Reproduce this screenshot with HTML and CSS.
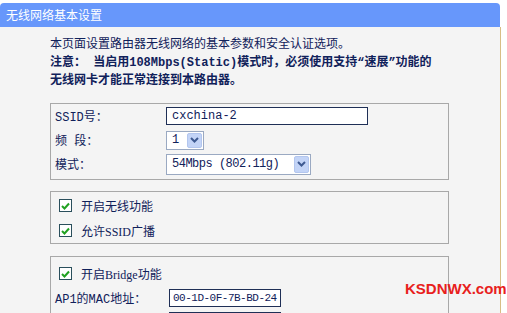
FILE: index.html
```html
<!DOCTYPE html>
<html lang="zh-CN">
<head>
    <meta charset="UTF-8">
    <title>无线网络基本设置</title>
    <link rel="stylesheet" href="styles.css">
</head>
<body>
    <div class="page">
        <div class="title_bar">无线网络基本设置</div>
        <div class="content">
            <div class="intro">
                <p>本页面设置路由器无线网络的基本参数和安全认证选项。</p>
                <p class="notice">注意： 当启用108Mbps(Static)模式时，必须使用支持“速展”功能的</p>
                <p class="notice">无线网卡才能正常连接到本路由器。</p>
            </div>

            <div class="group group_basic">
                <div class="row">
                    <span class="label">SSID号：</span>
                    <span class="text_input wide">cxchina-2</span>
                </div>
                <div class="row">
                    <span class="label">频 段：</span>
                    <span class="select_box small">
                        <span class="select_val">1</span>
                        <span class="select_btn"><svg width="9" height="6" viewBox="0 0 9 6"><path d="M1 1 L4.5 4.5 L8 1" fill="none" stroke="#3e5a92" stroke-width="2"/></svg></span>
                    </span>
                </div>
                <div class="row">
                    <span class="label">模式：</span>
                    <span class="select_box mode">
                        <span class="select_val">54Mbps (802.11g)</span>
                        <span class="select_btn"><svg width="9" height="6" viewBox="0 0 9 6"><path d="M1 1 L4.5 4.5 L8 1" fill="none" stroke="#3e5a92" stroke-width="2"/></svg></span>
                    </span>
                </div>
            </div>

            <div class="group group_check">
                <div class="check_row">
                    <span class="check"><svg width="9" height="8" viewBox="0 0 9 8"><path d="M1 4 L3.5 6.5 L8 1.5" fill="none" stroke="#21a121" stroke-width="2"/></svg></span>
                    开启无线功能
                </div>
                <div class="check_row">
                    <span class="check"><svg width="9" height="8" viewBox="0 0 9 8"><path d="M1 4 L3.5 6.5 L8 1.5" fill="none" stroke="#21a121" stroke-width="2"/></svg></span>
                    允许SSID广播
                </div>
            </div>

            <div class="group group_bridge">
                <div class="check_row">
                    <span class="check"><svg width="9" height="8" viewBox="0 0 9 8"><path d="M1 4 L3.5 6.5 L8 1.5" fill="none" stroke="#21a121" stroke-width="2"/></svg></span>
                    开启Bridge功能
                </div>
                <div class="row mac_row">
                    <span class="label">AP1的MAC地址：</span>
                    <span class="text_input mac">00-1D-0F-7B-BD-24</span>
                </div>
                <div class="row mac_row">
                    <span class="label"></span>
                    <span class="text_input mac"></span>
                </div>
            </div>
        </div>
    </div>
    <div class="watermark">KSDNWX.com</div>
</body>
</html>
```

FILE: styles.css
```css
* {
    margin: 0;
    padding: 0;
    box-sizing: border-box;
}

html,
body {
    width: 100%;
    height: 100%;
    background-color: #fff;
    overflow: hidden;
}

body {
    position: relative;
    font-family: "Liberation Mono", "Noto Sans CJK SC", monospace;
    font-size: 12px;
    color: #10215a;
}

.page {
    width: 501px;
    height: 313px;
    padding-top: 3px;
    overflow: hidden;
}

.title_bar {
    width: 500px;
    height: 24px;
    line-height: 24px;
    padding-left: 6px;
    background-color: #6797fb;
    border-radius: 4px 4px 0 0;
    color: #fff;
    font-family: "Noto Sans CJK SC", sans-serif;
    font-size: 12px;
}

.content {
    width: 501px;
    height: 286px;
    padding: 9px 51px 0 50px;
    background-color: #f4f4f4;
    border-right: 1px solid #d8bd85;
    overflow: hidden;
}

.intro p {
    line-height: 18px;
    white-space: nowrap;
}

.intro .notice {
    font-weight: bold;
}

.intro .notice:first-of-type {
    letter-spacing: 0.3px;
}

.group {
    border: 1px solid #a8a8a8;
    background-color: #f4f4f4;
}

.group_basic {
    margin-top: 13px;
    padding: 0 4px 3px 4px;
}

.group_check {
    margin-top: 11px;
    padding-top: 1px;
}

.group_bridge {
    margin-top: 12px;
    padding: 4px 4px 0 0;
}

.row {
    display: grid;
    grid-template-columns: 111px auto;
    align-items: center;
    height: 24px;
}

.mac_row {
    grid-template-columns: 114px auto;
    height: 23px;
    padding-left: 4px;
}

.label {
    white-space: nowrap;
}

.text_input {
    display: block;
    height: 18px;
    line-height: 16px;
    padding-left: 5px;
    background-color: #fff;
    border: 1px solid #1f2f56;
    white-space: nowrap;
    overflow: hidden;
}

.text_input.wide {
    width: 202px;
}

.text_input.mac {
    width: 112px;
    padding-left: 3px;
    font-size: 11px;
    letter-spacing: -0.5px;
}

.select_box {
    display: flex;
    align-items: center;
    justify-content: space-between;
    background-color: #fff;
    border: 1px solid #9aa9c2;
    padding: 1px;
}

.select_box.small {
    width: 38px;
    height: 19px;
}

.select_box.mode {
    width: 145px;
    height: 21px;
}

.select_val {
    padding-left: 4px;
    white-space: nowrap;
    font-size: 12px;
    letter-spacing: -0.5px;
}

.small .select_val {
    letter-spacing: 0;
}

.select_btn {
    display: flex;
    align-items: center;
    justify-content: center;
    width: 15px;
    height: 100%;
    background-color: #c3d4f7;
    border: 1px solid #b3c6ee;
    border-radius: 2px;
}

.check_row {
    display: flex;
    align-items: center;
    height: 25px;
    padding-left: 8px;
    font-family: "Liberation Serif", "Noto Sans CJK SC", serif;
    white-space: nowrap;
}

.check {
    display: flex;
    align-items: center;
    justify-content: center;
    width: 13px;
    height: 13px;
    margin-right: 9px;
    background-color: #fff;
    border: 1px solid #2a4f5c;
}

.watermark {
    position: absolute;
    left: 405px;
    top: 280px;
    font-family: "Liberation Sans", sans-serif;
    font-size: 15px;
    font-weight: bold;
    color: #e8201c;
    white-space: nowrap;
}
```
